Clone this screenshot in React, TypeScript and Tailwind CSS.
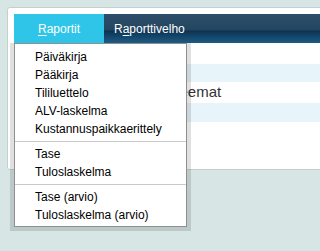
import React from "react";

const groups: string[][] = [
  ["Päiväkirja", "Pääkirja", "Tililuettelo", "ALV-laskelma", "Kustannuspaikkaerittely"],
  ["Tase", "Tuloslaskelma"],
  ["Tase (arvio)", "Tuloslaskelma (arvio)"],
];

export default function App() {
  return (
    <div
      className="relative h-[251px] w-full min-w-[205px] overflow-hidden bg-[#d7e5e5] pl-[7px] pt-[7px]"
      style={{ fontFamily: '"Liberation Sans", Arial, sans-serif' }}
    >
      {/* page panel behind the menu */}
      <div className="-mr-[20px] h-[163px] rounded-[3px] border border-[#c3d0d0] bg-white pl-[6px] pt-[6px]">
        <nav className="flex h-[29px] text-[12px] text-white">
          <div className="flex w-[90px] items-center justify-center bg-[#2ec5e8]">
            <span>
              <span className="underline underline-offset-2">R</span>aportit
            </span>
          </div>
          <div className="flex flex-1 items-center bg-[linear-gradient(to_bottom,#2d4d69_0%,#25465f_55%,#0c3353_58%,#1d5b85_100%)] pl-[10px]">
            <span>
              R<span className="underline underline-offset-2">a</span>porttivelho
            </span>
          </div>
        </nav>
        <div className="mt-[21px] text-[15px] text-[#333]">
          <div className="h-[18px] bg-[#e7f4fa]" />
          <div className="flex h-[21px] items-center">
            <span className="pl-[158px]">Teemat</span>
          </div>
          <div className="h-[19px] bg-[#e7f4fa]" />
        </div>
      </div>

      {/* dropdown menu */}
      <div className="absolute left-[10px] top-[43px] bg-black/[0.12] px-[4px] pb-[4px]">
        <ul className="w-[173px] border border-[#8f8f8f] bg-white pb-[2px] pt-[4px] text-[12px] leading-[18px] text-black">
          {groups.map((items, g) => (
            <React.Fragment key={g}>
              {g > 0 && <li className="my-[3px] h-px bg-[#c9c9c9]" />}
              {items.map((label) => (
                <li key={label} className="pl-[20px]">
                  {label}
                </li>
              ))}
            </React.Fragment>
          ))}
        </ul>
      </div>
    </div>
  );
}
